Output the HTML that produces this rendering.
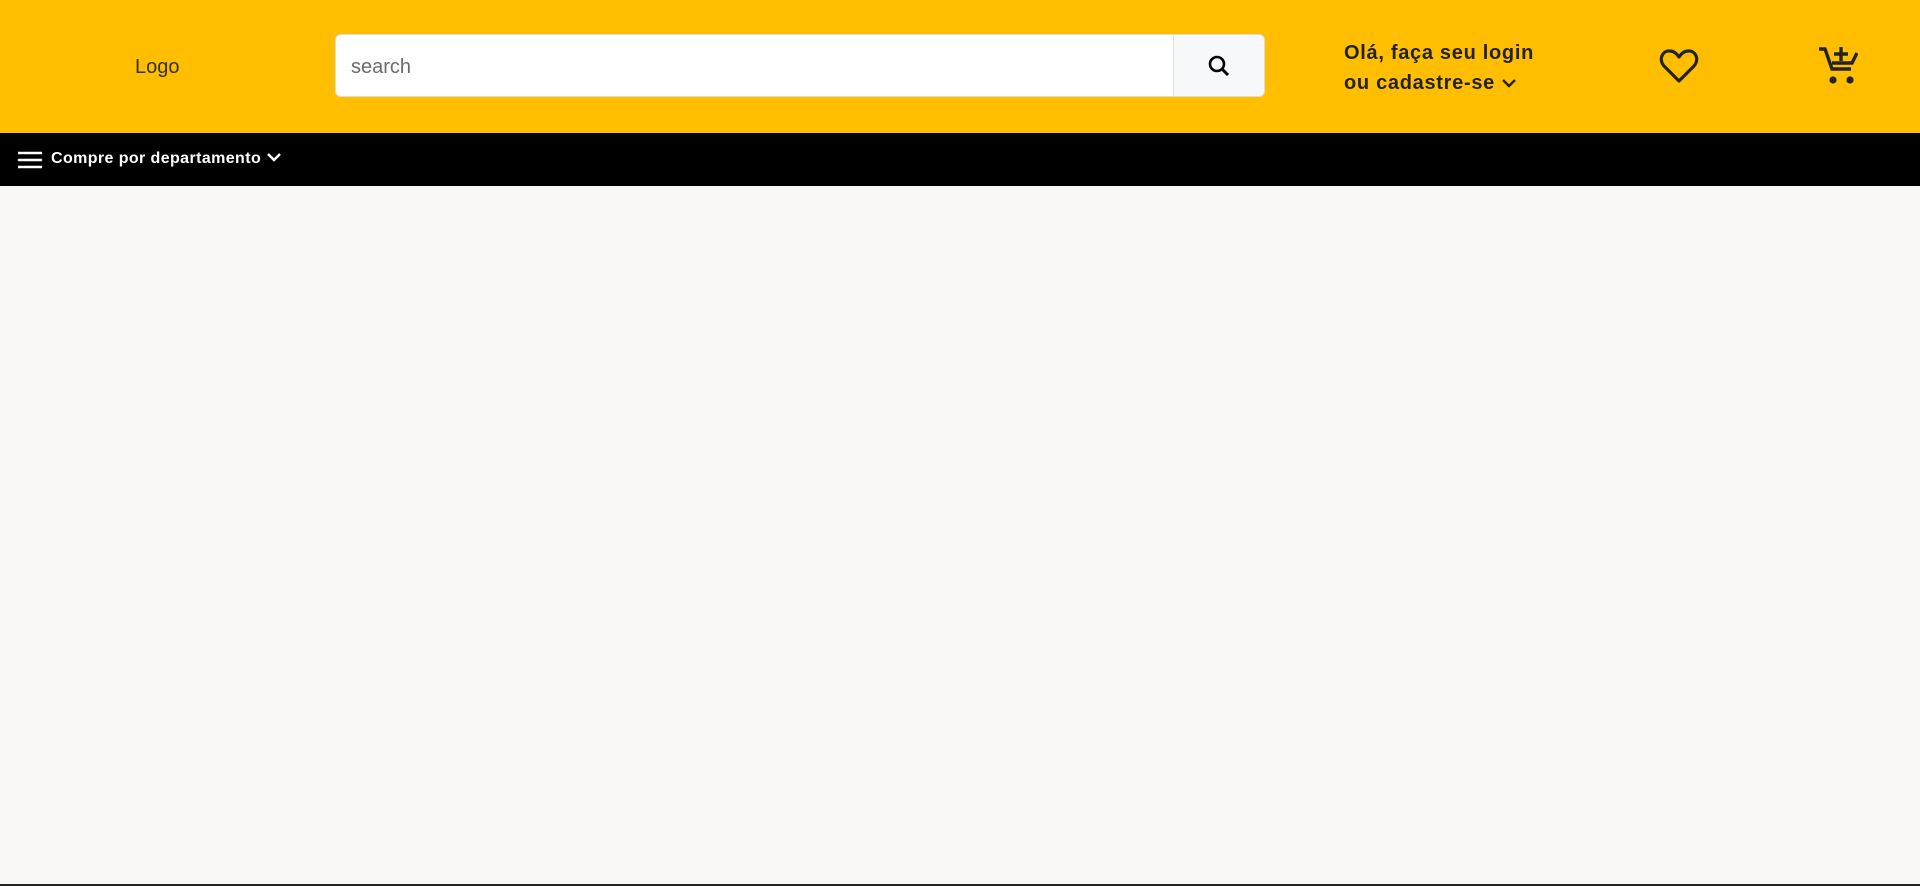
<!DOCTYPE html>
<html><head><meta charset="utf-8"><style>
*{box-sizing:border-box;margin:0;padding:0}
body{width:1920px;height:886px;background:#f9f8f4;font-family:"Liberation Sans",sans-serif;position:relative;overflow:hidden}
.top{position:absolute;left:0;top:0;width:1920px;height:133px;background:#ffbf00}
.logo{position:absolute;left:135px;top:56px;font-size:20px;color:#333}
.search{position:absolute;left:335px;top:34px;width:930px;height:63px;background:#fff;border:1px solid #dcdcdc;border-radius:6px;overflow:hidden}
.search span{position:absolute;left:15px;top:21px;font-size:20px;color:#6b6b6b}
.btn{position:absolute;right:0;top:0;width:91px;height:63px;background:#f7f8fa;border-left:1px solid #e2e2e2}
.login{position:absolute;left:1344px;top:38px;font-size:20px;font-weight:bold;color:#222;line-height:30px;letter-spacing:0.7px}
.bar{position:absolute;left:0;top:133px;width:1920px;height:53px;background:#000;color:#fff}
.bar .t{position:absolute;left:51px;top:17px;font-size:16px;font-weight:bold;letter-spacing:0.4px}
.bl{position:absolute;left:0;top:884px;width:1920px;height:2px;background:#222}
</style></head><body>
<div class="top">
<div class="logo">Logo</div>
<div class="search"><span>search</span>
<div class="btn"><svg width="91" height="63" viewBox="0 0 91 63"><circle cx="43" cy="29" r="7" fill="none" stroke="#000" stroke-width="2.6"/><line x1="48" y1="34" x2="54" y2="40" stroke="#000" stroke-width="3"/></svg></div></div>
<div class="login">Olá, faça seu login<br>ou cadastre-se <svg width="16" height="12" viewBox="0 0 16 12"><path d="M2 3l6 6 6-6" fill="none" stroke="#222" stroke-width="2.4"/></svg></div>
<svg style="position:absolute;left:1659px;top:48px" width="40" height="36" viewBox="0 0 40 36"><path d="M20 33L5 18C-1 11 4 2 11 3c4 0 7 3 9 6 2-3 5-6 9-6 7-1 12 8 6 15z" fill="none" stroke="#222" stroke-width="3.2" stroke-linejoin="round"/></svg>
<svg style="position:absolute;left:1818px;top:45px" width="40" height="42" viewBox="0 0 40 42"><path d="M1 4h6l7 20h19M14 18h20l5-10" fill="none" stroke="#222" stroke-width="3.4"/><path d="M23 16V2M16 9h14" stroke="#222" stroke-width="3.4"/><circle cx="15" cy="35" r="3.6" fill="#222"/><circle cx="32" cy="35" r="3.6" fill="#222"/></svg>
</div>
<div class="bar">
<svg style="position:absolute;left:18px;top:18px" width="25" height="18" viewBox="0 0 25 18"><path d="M0 2h24M0 9h24M0 16h24" stroke="#fff" stroke-width="2.5"/></svg>
<div class="t">Compre por departamento <svg width="16" height="12" viewBox="0 0 16 12"><path d="M2 3l6 6 6-6" fill="none" stroke="#fff" stroke-width="2.4"/></svg></div>
</div>
<div class="bl"></div>
</body></html>
